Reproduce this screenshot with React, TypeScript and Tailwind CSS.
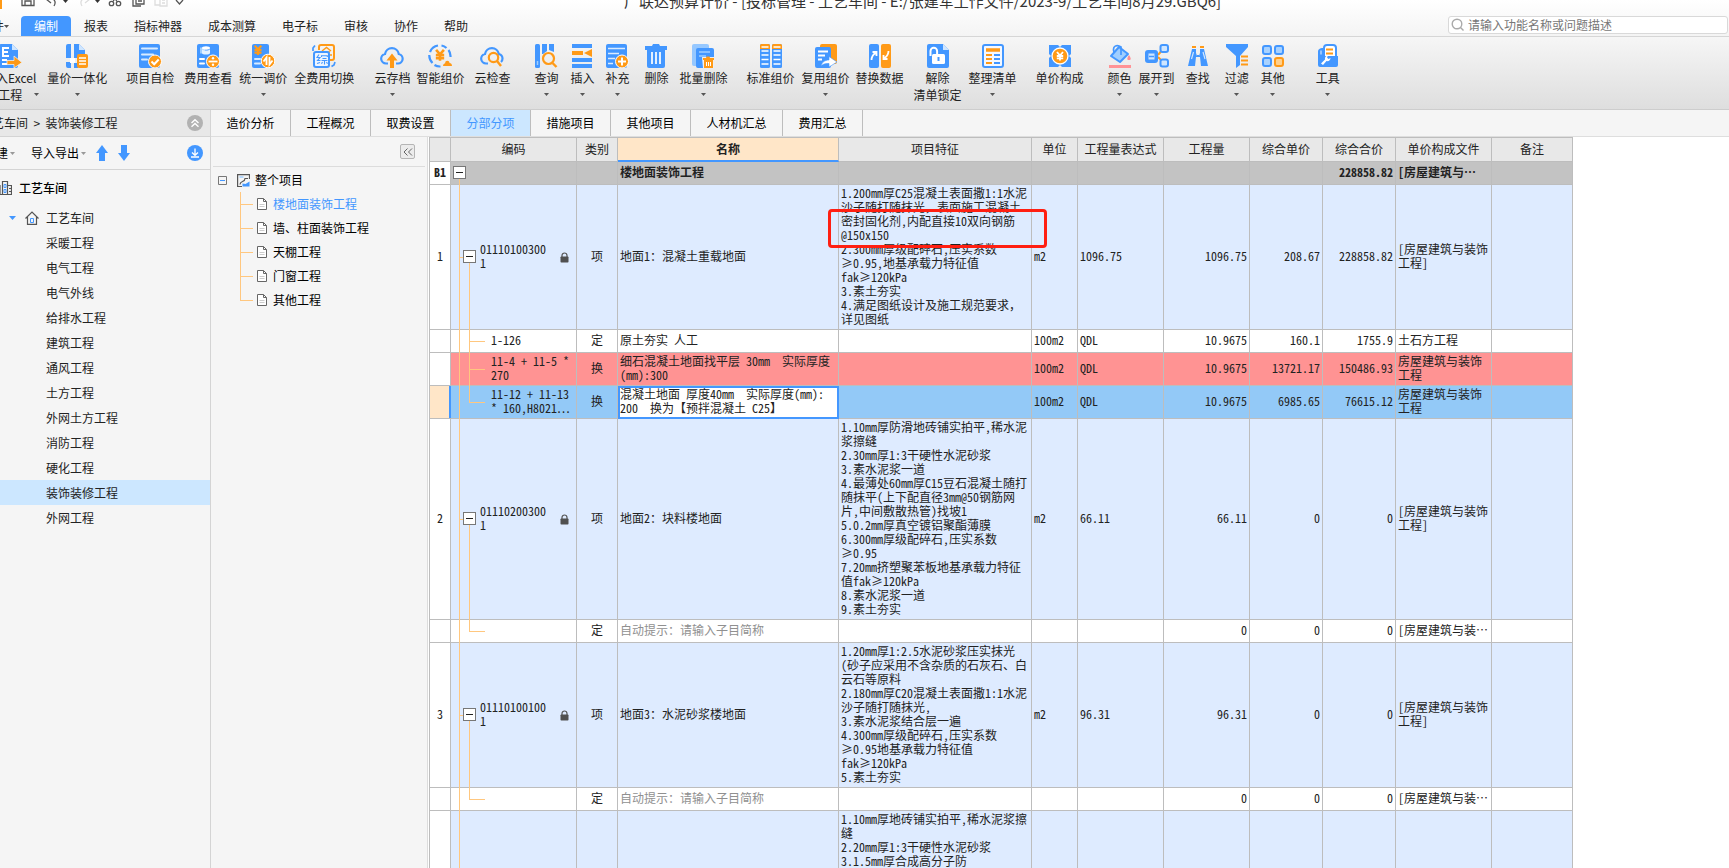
import React from "react";

const B = "#4397ff";
const O = "#ff9a17";

const Svg = ({ children, className = "size-6" }: { children: React.ReactNode; className?: string }) => (
  <svg viewBox="0 0 24 24" className={className} fill="none" aria-hidden="true">
    {children}
  </svg>
);

const Caret = ({ className = "text-[#555]" }: { className?: string }) => (
  <svg viewBox="0 0 5 3" className={`h-[3px] w-[5px] shrink-0 ${className}`} aria-hidden="true">
    <path d="M0 0h5L2.5 3z" fill="currentColor" />
  </svg>
);

const Yen = ({ x, y, s = 1, c = "#fff", w = 1.6 }: { x: number; y: number; s?: number; c?: string; w?: number }) => (
  <path
    transform={`translate(${x} ${y}) scale(${s})`}
    d="M-3-4 0-.5 3-4M0-.5V4.5M-3.2 0h6.4M-3.2 2.4h6.4"
    stroke={c}
    strokeWidth={w}
  />
);

const icons: Record<string, React.ReactNode> = {
  excel: (
    <>
      <path d="M1 2a2 2 0 0 1 2-2h11l6 6v16a2 2 0 0 1-2 2H3a2 2 0 0 1-2-2z" fill={B} />
      <path d="M14 0l6 6h-6z" fill="#cfe6ff" />
      <path d="M11 4H5v8h6M5 8h5M4 16h5M4 20h5" stroke="#fff" strokeWidth="2" />
      <path d="M9 16.5h7V12l8 6.5-8 5.500V20.500H9z" fill={O} stroke="#eee" strokeWidth=".8" />
    </>
  ),
  combine: (
    <>
      <path d="M1 2a2 2 0 0 1 2-2h3v14H1zM9 0h5l6 6v8H9zM1 18h5v6H3a2 2 0 0 1-2-2zM9 19h4v5H9z" fill={B} />
      <path d="M14 0l6 6h-6z" fill="#cfe6ff" />
      <path d="M5 14h5v5H5z" fill="#fff" />
      <rect x="12" y="10" width="11" height="14" rx="2" fill={O} />
      <path d="M14 14h7M14 17h7M14 20h7" stroke="#fff" strokeWidth="1.500" />
    </>
  ),
  check: (
    <>
      <rect x="1" y="0" width="21" height="24" rx="2" fill={B} />
      <path d="M4 4.500h15M4 10.500h11M4 15.500h5" stroke="#d9ebff" strokeWidth="2" strokeLinecap="round" />
      <circle cx="17" cy="17.500" r="6.500" fill={O} stroke="#fff" />
      <path d="M13.500 17.500l2.700 2.700 4.500-4.700" stroke="#fff" strokeWidth="2" />
    </>
  ),
  fee: (
    <>
      <rect x="1" y="0" width="22" height="24" rx="2" fill={B} />
      <path d="M4 3.500h5v6H4z" fill="#9fceff" />
      <ellipse cx="10" cy="4" rx="4" ry="1.700" fill="#fff" />
      <path d="M6 5v4c0 2 8 2 8 0V5c-1 2-7 2-8 0z" fill="#e4f1ff" />
      <path d="M4 15h4M4 19.500h4" stroke="#fff" strokeWidth="2" strokeLinecap="round" />
      <circle cx="17" cy="17.500" r="6.500" fill={O} stroke="#fff" />
      <path d="M12.500 17.500h9" stroke="#fff" strokeWidth="1.800" />
      <circle cx="17" cy="14.300" r="1.200" fill="#fff" />
      <circle cx="17" cy="20.700" r="1.200" fill="#fff" />
    </>
  ),
  adjust: (
    <>
      <rect x="1" y="0" width="17" height="24" rx="2" fill={B} />
      <Yen x={7} y={6} c={O} w={2} s={1.100} />
      <path d="M4 15h5M4 19.500h5" stroke="#d9ebff" strokeWidth="2" strokeLinecap="round" />
      <circle cx="17" cy="17" r="6.800" fill={O} stroke="#fff" />
      <path d="M12.500 17.500l3-4V21M21.500 16.500l-3 4V13" stroke="#fff" strokeWidth="1.800" />
    </>
  ),
  total: (
    <>
      <path d="M7 6V3a2 2 0 0 1 2-2h11a2 2 0 0 1 2 2v11a2 2 0 0 1-2 2h-2" stroke={O} strokeWidth="2" />
      <path d="M10 7l4.500-3.500L19 7M12 8h6M18 11h2" stroke={O} strokeWidth="1.500" />
      <path d="M1 7V4l2-2.500M23 18l-1 3-2.500 1.500" stroke={B} strokeWidth="1.700" />
      <rect x="2" y="8" width="15" height="15" rx="2" fill="#eef5ff" stroke={B} strokeWidth="2" />
      <path d="M7 10.500l-2 3h3l-2.500 3h3M5 19.500l3-1M9.500 13v-1.200h5.800V13M10.500 14.500h4M9.500 16.500h6M12.500 16.500v4M10.500 18l-1 1.700M14.500 18l1 1.700" stroke={B} strokeWidth="1.100" />
    </>
  ),
  cloudUp: (
    <>
      <path d="M8 19.500H6A4.800 4.800 0 0 1 5 10a7 7 0 0 1 13.800 0A4.800 4.800 0 0 1 18 19.500h-2" stroke={B} strokeWidth="2.200" />
      <path d="M12 9.500l5.500 7H14V24h-4v-7.500H6.500z" fill={O} />
    </>
  ),
  smart: (
    <>
      <path d="M10 1.500A10.500 10.500 0 0 0 2 8M1.300 11a10.500 10.500 0 0 0 3.200 8M6.500 21a10.500 10.500 0 0 0 6 1.500M13.500 1.500a10.500 10.500 0 0 1 5 2.500M20.500 6a10.500 10.500 0 0 1 2 7" stroke={B} strokeWidth="2.200" />
      <Yen x={12} y={11} c={O} w={2} s={1.300} />
      <path d="M15 22c0-2 1.500-2.500 2.200-2.800C17 16 21.500 16 21.500 19c1.500 0 2.500 1 2.500 3z" fill={O} />
    </>
  ),
  cloudFind: (
    <>
      <path d="M8 19.500H6A4.800 4.800 0 0 1 5 10a7 7 0 0 1 13.800 0c2 .6 3.700 2.200 3.700 4.500 0 1.500-.5 2.700-1.500 3.500" stroke={B} strokeWidth="2.200" />
      <circle cx="13.500" cy="13.500" r="4.700" stroke={O} strokeWidth="2.200" />
      <path d="M17 17l4 5" stroke={O} strokeWidth="2.400" />
    </>
  ),
  query: (
    <>
      <rect x="1" y="0" width="5" height="24" rx="1.500" fill={B} />
      <path d="M8 0h5v7l-4 3H8zM15 0h5v8l-5-2z" fill={B} />
      <path d="M3.500 17v4" stroke="#9fceff" strokeWidth="1.500" />
      <circle cx="14.500" cy="14.500" r="5.500" stroke={O} strokeWidth="2.200" />
      <path d="M18.500 19l4 4" stroke={O} strokeWidth="2.400" />
    </>
  ),
  insert: (
    <>
      <path d="M2 2h20M2 16h20M2 22h20" stroke={B} strokeWidth="4" strokeLinejoin="round" />
      <path d="M2 9h11" stroke={O} strokeWidth="4" />
      <path d="M22 5v8l-8-4z" fill={O} />
    </>
  ),
  add: (
    <>
      <rect x="1" y="0" width="21" height="24" rx="2" fill={B} />
      <path d="M3 4.500h17M3 9.500h11M3 14.500h7M3 19.500h5" stroke="#d9ebff" strokeWidth="1.700" />
      <circle cx="17" cy="17.500" r="6.500" fill={O} stroke="#fff" />
      <path d="M13 17.500h8M17 13.500v8" stroke="#fff" strokeWidth="2" />
    </>
  ),
  trash: (
    <>
      <path d="M1 2h7l1-2h6l1 2h7v4H1z" fill={B} />
      <path d="M3 5h18v17a2 2 0 0 1-2 2H5a2 2 0 0 1-2-2z" fill={B} />
      <path d="M8 8v12M12 8v12M16 8v12" stroke="#fff" strokeWidth="1.700" />
    </>
  ),
  trashes: (
    <>
      <rect x="1" y="0" width="17" height="22" rx="2" fill="#96c8ff" />
      <rect x="5" y="4" width="18" height="20" rx="2" fill={B} />
      <path d="M8 8h11M8 12h7" stroke="#9fceff" strokeWidth="1.700" />
      <path d="M11 13h12v11H12z" fill="#f0f0f0" />
      <path d="M12 14h3l.5-1.500h3L19 14h4v2H12z" fill={O} />
      <path d="M13 16h9v8h-9z" fill={O} />
      <path d="M15.500 18v4M17.500 18v4M19.500 18v4" stroke="#fff" />
    </>
  ),
  standard: (
    <>
      <rect x="1" y="0" width="10" height="24" rx="1.500" fill={B} />
      <rect x="13" y="0" width="10" height="24" rx="1.500" fill={B} />
      <path d="M1 5V1.500A1.500 1.500 0 0 1 2.500 0h7A1.500 1.500 0 0 1 11 1.500V5zM13 5V1.500A1.500 1.500 0 0 1 14.500 0h7A1.500 1.500 0 0 1 23 1.500V5z" fill={O} />
      <path d="M2.500 3h7M14.500 3h7M2.500 7h7M14.500 7h7M2.500 11h7M14.500 11h7M2.500 15.500h7M14.500 15.500h7M2.500 20h7M14.500 20h7" stroke="#fff" strokeWidth="1.700" />
    </>
  ),
  reuse: (
    <>
      <rect x="6" y="0" width="17" height="20" rx="2" fill={O} />
      <rect x="1" y="3" width="16" height="21" rx="2" fill={B} />
      <path d="M4 7.500h10M4 11.500h7M4 15.500h4" stroke="#fff" strokeWidth="1.800" />
      <path d="M7 22c1-4 4-6 8-6v-3.500l8 5.500-8 5v-3.500c-4 0-6 .5-8 2.500z" fill="#fff" stroke={B} strokeWidth=".6" />
    </>
  ),
  replace: (
    <>
      <rect x="1" y="0" width="10" height="24" rx="2" fill={B} />
      <rect x="13" y="0" width="10" height="24" rx="2" fill={O} />
      <path d="M3.500 16c0-3 1-5 4-7M4.500 8h4v4M20.500 7c0 3-1 5-4 7M19.500 15h-4v-4" stroke="#fff" strokeWidth="1.800" />
    </>
  ),
  unlock: (
    <>
      <path d="M1 2a2 2 0 0 1 2-2h14l6 6v16a2 2 0 0 1-2 2H3a2 2 0 0 1-2-2z" fill={B} />
      <path d="M17 0l6 6h-6z" fill="#cfe6ff" />
      <path d="M4.500 12V7a3.300 3.300 0 0 1 6.600 0v3" stroke="#fff" strokeWidth="2" />
      <rect x="6" y="10" width="13" height="10" rx="1.500" fill="#fff" />
      <path d="M12.500 13v4" stroke={B} strokeWidth="2" />
    </>
  ),
  list: (
    <>
      <rect x="2" y="1" width="20" height="22" rx="2" fill="#f4f8ff" stroke={B} strokeWidth="2" />
      <path d="M5 6h14" stroke={O} strokeWidth="3.500" />
      <path d="M5 11h6M5 15h6M5 19h6" stroke={O} strokeWidth="1.800" />
      <path d="M13 15h6M13 19h6M13 11h6" stroke={B} strokeWidth="1.800" />
    </>
  ),
  price: (
    <>
      <path d="M1 1h9l2 2 2-2h9v9l-2 2 2 2v9h-9l-2-2-2 2H1v-9l2-2-2-2z" fill={B} />
      <circle cx="12" cy="12" r="8" fill={O} stroke="#fff" strokeWidth="1.300" />
      <Yen x={12} y={12} w={1.800} />
    </>
  ),
  color: (
    <>
      <path d="M11 3l9 7-8 8-9-6z" fill="#9fceff" stroke={B} strokeWidth="2" strokeLinejoin="round" />
      <path d="M6 8c-2-6 3-8 7-5v8" stroke={B} strokeWidth="1.700" />
      <path d="M21 11c2 3 2.500 5 0 5s-2-2 0-5z" fill="#ff8f93" />
      <path d="M1 22.500h22" stroke="#ff9396" strokeWidth="3" />
    </>
  ),
  expand: (
    <>
      <path d="M13 11l5-6M13 13l5 5" stroke={O} strokeWidth="2" />
      <rect x="0" y="6" width="13" height="13" rx="3" fill={B} />
      <rect x="3.500" y="9.500" width="6" height="6" fill="#cfe6ff" />
      <path d="M4 12.500h5" stroke={B} strokeWidth="1.500" />
      <rect x="15.500" y="1" width="7.500" height="7" rx="2" fill="#cfe6ff" stroke={B} strokeWidth="2" />
      <rect x="15.500" y="15.500" width="7.500" height="7" rx="2" fill="#cfe6ff" stroke={B} strokeWidth="2" />
    </>
  ),
  find: (
    <>
      <path d="M6 5h4v4l1 3v-1h2v1l1-3V5h4l4 17h-7l-1-9h-4l-1 9H2z" fill={B} />
      <path d="M6 3h4M14 3h4" stroke={O} strokeWidth="2" />
      <path d="M7.500 8l-2 7M17 8l2 7" stroke="#cfe6ff" strokeWidth="1.200" />
    </>
  ),
  filter: (
    <>
      <path d="M1 0h22v3l-8 9v9l-4 3V12L1 3z" fill={B} />
      <path d="M16 12.500h7M16 16.500h7M16 20.500h7" stroke={O} strokeWidth="2" />
    </>
  ),
  other: (
    <>
      <rect x="2" y="2" width="8" height="8" rx="2" fill="#a8d2ff" stroke={B} strokeWidth="2" />
      <rect x="14" y="2" width="8" height="8" rx="2" fill="#a8d2ff" stroke={B} strokeWidth="2" />
      <rect x="2" y="14" width="8" height="8" rx="2" fill="#a8d2ff" stroke={B} strokeWidth="2" />
      <rect x="14" y="14" width="8" height="8" rx="2" fill="#ffd08d" stroke={O} strokeWidth="2" />
    </>
  ),
  tools: (
    <>
      <rect x="8" y="1" width="12" height="14" rx="3" fill="#fff" stroke={B} strokeWidth="2" />
      <path d="M10 5.500h7M10 9.500h7" stroke={O} strokeWidth="2" />
      <path d="M2 8c0-3 2-4 5-4v8h15v9a2 2 0 0 1-2 2H4a2 2 0 0 1-2-2z" fill={B} />
      <path d="M5 6.500v4" stroke="#cfe6ff" strokeWidth="1.200" />
      <path d="M5 19.500l4-4c-.5-2 1-4 3-4l-1 2 1.500 1.500 2-1c0 2.500-2 3.500-4 3L7 21z" fill="#fff" />
    </>
  ),
};

type Tool = { icon: string; label: string; gap: string; second?: string; caret?: boolean };

const tools: Tool[] = [
  { icon: "excel", label: "导入Excel", second: "工程", gap: "-ml-4", caret: true },
  { icon: "combine", label: "量价一体化", gap: "ml-[11px]", caret: true },
  { icon: "check", label: "项目自检", gap: "ml-[19px]" },
  { icon: "fee", label: "费用查看", gap: "ml-2.5" },
  { icon: "adjust", label: "统一调价", gap: "ml-[7px]", caret: true },
  { icon: "total", label: "全费用切换", gap: "ml-[7px]" },
  { icon: "cloudUp", label: "云存档", gap: "ml-5", caret: true },
  { icon: "smart", label: "智能组价", gap: "ml-1.5" },
  { icon: "cloudFind", label: "云检查", gap: "ml-2.5" },
  { icon: "query", label: "查询", gap: "ml-6", caret: true },
  { icon: "insert", label: "插入", gap: "ml-3", caret: true },
  { icon: "add", label: "补充", gap: "ml-[11px]", caret: true },
  { icon: "trash", label: "删除", gap: "ml-[15px]" },
  { icon: "trashes", label: "批量删除", gap: "ml-[11px]", caret: true },
  { icon: "standard", label: "标准组价", gap: "ml-[19px]" },
  { icon: "reuse", label: "复用组价", gap: "ml-[7px]", caret: true },
  { icon: "replace", label: "替换数据", gap: "ml-1.5" },
  { icon: "unlock", label: "解除", second: "清单锁定", gap: "ml-2.5" },
  { icon: "list", label: "整理清单", gap: "ml-[7px]", caret: true },
  { icon: "price", label: "单价构成", gap: "ml-[19px]" },
  { icon: "color", label: "颜色", gap: "ml-6", caret: true },
  { icon: "expand", label: "展开到", gap: "ml-[7px]", caret: true },
  { icon: "find", label: "查找", gap: "ml-[11px]" },
  { icon: "filter", label: "过滤", gap: "ml-[15px]", caret: true },
  { icon: "other", label: "其他", gap: "ml-3", caret: true },
  { icon: "tools", label: "工具", gap: "ml-[31px]", caret: true },
];

const menus = ["编制", "报表", "指标神器", "成本测算", "电子标", "审核", "协作", "帮助"];
const tabs = ["造价分析", "工程概况", "取费设置", "分部分项", "措施项目", "其他项目", "人材机汇总", "费用汇总"];
const projects = ["采暖工程", "电气工程", "电气外线", "给排水工程", "建筑工程", "通风工程", "土方工程", "外网土方工程", "消防工程", "硬化工程", "装饰装修工程", "外网工程"];
const sections = ["楼地面装饰工程", "墙、柱面装饰工程", "天棚工程", "门窗工程", "其他工程"];

function TitleBar() {
  return (
    <div className="relative -mt-3.5 flex h-[30px] items-center">
      <div className="flex items-center text-[#666]">
        <span className="h-4 w-0.5 bg-[#ff9a17]" />
        <svg viewBox="0 0 170 16" className="ml-4 h-4 w-[170px]" fill="none" stroke="#555" strokeWidth="1.300" aria-hidden="true">
          <path d="M4 0v12.500h12V0M7 12V8h6v4" />
          <path d="M28 6l5-4M28 6l5 4M30 6c5-2 9 2 6 7" />
          <path d="M45 7h5l-2.500 3z" fill="#333" stroke="none" />
          <path d="M72 6l-5-4M72 6l-5 4M70 6c-5-2-9 2-6 7" stroke="#ddd" />
          <path d="M77 7h5l-2.500 3z" fill="#333" stroke="none" />
          <circle cx="93.500" cy="10.500" r="2.200" />
          <circle cx="100.500" cy="10.500" r="2.200" />
          <path d="M95 8.500L100 1M99 8.500L94 1" />
          <path d="M118 2v9h8V2M115 4v9h8M120 5h4M120 8h4" />
          <path d="M137 0v12h5M142 4h7v9h-7zM144 7h3M144 10h3" stroke="#ddd" />
          <path d="M158 7l3.500 4L165 7" />
        </svg>
      </div>
      <h1 className="absolute left-[624px] whitespace-nowrap text-[15px] leading-7 text-[#333]">
        广联达预算计价 - [投标管理 - 工艺车间 - E:/张建军工作文件/2023-9/工艺车间8月29.GBQ6]
      </h1>
    </div>
  );
}

function MenuBar() {
  return (
    <div className="flex h-5 items-stretch">
      <nav className="-ml-5 flex">
        <button className="flex w-[41px] items-center whitespace-nowrap">
          文件
          <Caret />
        </button>
        {menus.map((m, i) => (
          <button
            key={m}
            className={i === 0 ? "rounded-t-sm bg-[#4397ff] px-[13px] leading-5 text-white" : "px-[13px] leading-5"}
          >
            {m}
          </button>
        ))}
      </nav>
      <label className="ml-auto mr-px flex h-[18px] w-[280px] items-center rounded-[3px] border border-[#d9d9d9] bg-white">
        <svg viewBox="0 0 14 14" className="ml-0.5 size-3.5" fill="none" stroke="#aaa" strokeWidth="1.400" aria-hidden="true">
          <circle cx="6" cy="6" r="4.800" />
          <path d="M9.500 9.500l3 3" />
        </svg>
        <input
          aria-label="搜索功能"
          placeholder="请输入功能名称或问题描述"
          className="ml-[3px] h-4 flex-1 bg-transparent text-xs text-[#444] outline-none placeholder:text-[#777]"
        />
      </label>
    </div>
  );
}

function Ribbon() {
  return (
    <div className="flex h-[74px] items-start overflow-hidden border-y border-b-[#cdcdcd] border-t-[#d6d6d6] bg-linear-to-b from-[#f6f6f6] to-[#dedede] pt-[7px]">
      {tools.map((t) => (
        <button key={t.label} className={`flex shrink-0 flex-col items-center whitespace-nowrap leading-[17px] ${t.gap}`}>
          <Svg>{icons[t.icon]}</Svg>
          <span className="mt-px">{t.label}</span>
          {t.second ? (
            <span className="relative">
              {t.second}
              {t.caret && (
                <span className="absolute left-full top-[7px] ml-3">
                  <Caret />
                </span>
              )}
            </span>
          ) : (
            t.caret && (
              <span className="flex h-4 items-center">
                <Caret />
              </span>
            )
          )}
        </button>
      ))}
    </div>
  );
}

function ProjectPanel() {
  return (
    <aside className="flex w-[211px] shrink-0 flex-col overflow-hidden border-r border-[#d4d4d4] bg-[#f5f5f5]">
      <div className="flex h-[27px] items-center border-b border-[#d4d4d4] bg-[#e8e8e8] pr-[7px]">
        <span className="-ml-5 whitespace-pre">{"工艺车间  >  装饰装修工程"}</span>
        <button aria-label="收起" className="ml-auto">
          <svg viewBox="0 0 16 16" className="size-4" fill="none" aria-hidden="true">
            <circle cx="8" cy="8" r="8" fill="#b2b2b2" />
            <path d="M4.500 8L8 4.700 11.500 8M4.500 11.700L8 8.400l3.500 3.300" stroke="#fff" strokeWidth="1.400" />
          </svg>
        </button>
      </div>
      <div className="flex h-[33px] items-center border-b border-[#d4d4d4] pr-[7px]">
        <button className="-ml-4 flex items-center gap-0.5 whitespace-nowrap text-black">
          新建
          <Caret className="text-[#999]" />
        </button>
        <button className="ml-4 flex items-center gap-0.5 whitespace-nowrap text-black">
          导入导出
          <Caret className="text-[#999]" />
        </button>
        <button aria-label="上移" className="ml-2.5">
          <svg viewBox="0 0 12 16" className="h-4 w-3" aria-hidden="true">
            <path d="M6 0l6 8H9v8H3V8H0z" fill={B} />
          </svg>
        </button>
        <button aria-label="下移" className="ml-2.5">
          <svg viewBox="0 0 12 16" className="h-4 w-3" aria-hidden="true">
            <path d="M6 16l6-8H9V0H3v8H0z" fill={B} />
          </svg>
        </button>
        <button aria-label="下载" className="ml-auto">
          <svg viewBox="0 0 16 16" className="size-4" fill="none" aria-hidden="true">
            <circle cx="8" cy="8" r="8" fill={B} />
            <path d="M8 3.500V10M5 7.500L8 10.300 11 7.500M4 12h8" stroke="#fff" strokeWidth="1.300" />
          </svg>
        </button>
      </div>
      <div className="flex h-9 items-center text-black">
        <svg viewBox="0 0 12 14" className="mr-[7px] h-3.5 w-3" fill="none" aria-hidden="true">
          <path d="M0 4v9.500M0 13.500h12M2.500 13V.5h5V13M8 4.500h3.500V13M9 7.500h2M9 10.500h2" stroke="#555" strokeWidth="1.200" />
          <path d="M4 3.500h2v3H4zM4 8.500h2v3H4z" stroke={B} />
        </svg>
        <span className="font-medium">工艺车间</span>
      </div>
      <button className="flex h-6 items-center pl-[9px]">
        <svg viewBox="0 0 7 4" className="h-1 w-[7px]" aria-hidden="true">
          <path d="M0 0h7L3.500 4z" fill={B} />
        </svg>
        <svg viewBox="0 0 14 14" className="ml-[9px] mr-[7px] size-3.5" fill="none" aria-hidden="true">
          <path d="M.5 7.500L7 1l6.500 6.500M2.500 6v7.300h9V6" stroke="#555" strokeWidth="1.200" />
          <path d="M5.500 7.500h3v4h-3z" stroke={B} />
        </svg>
        工艺车间
      </button>
      {projects.map((p) => (
        <button key={p} className={`h-[25px] shrink-0 pl-[46px] text-left ${p === "装饰装修工程" ? "bg-[#cce7ff]" : ""}`}>
          {p}
        </button>
      ))}
    </aside>
  );
}

function SectionPanel() {
  return (
    <section className="flex w-[217px] shrink-0 flex-col border-r border-[#dcdcdc] bg-[#f5f5f5] text-black">
      <div className="mx-0.5 flex h-[30px] items-center justify-end border-b border-[#dcdcdc] pr-2.5">
        <button aria-label="折叠" className="flex size-[15px] items-center justify-center rounded-[2px] border border-[#b5b5b5] bg-[#ececec]">
          <svg viewBox="0 0 10 8" className="h-2 w-2.5" fill="none" stroke="#666" aria-hidden="true">
            <path d="M4.500.5L1 4l3.500 3.500M9 .5L5.500 4 9 7.500" />
          </svg>
        </button>
      </div>
      <button className="mt-px flex h-6 items-center pl-[7px]">
        <svg viewBox="0 0 9 9" className="size-[9px]" fill="none" aria-hidden="true">
          <path d="M.5.500h8v8h-8z" stroke="#777" />
          <path d="M2 4.500h5" stroke={B} />
        </svg>
        <svg viewBox="0 0 13 13" className="ml-2.5 mr-[5px] size-[13px]" fill="none" aria-hidden="true">
          <path d="M12.500 5V.6H.6v11.900H5M3 10.500c0-4 5-2 5-6h3" stroke="#555" strokeWidth="1.200" />
          <path d="M2.500 3h4" stroke="#9fceff" strokeWidth="1.500" />
          <path d="M5.500 12.500v-3l3 .5L12.500 7.500v5z" fill={B} />
        </svg>
        整个项目
      </button>
      <ul>
        {sections.map((s, i) => (
          <li key={s} className="relative flex h-6 items-center pl-[46px]">
            <span className={`absolute left-[29px] top-0 w-px bg-[#ffc77f] ${i === sections.length - 1 ? "h-3" : "h-6"}`} />
            <span className="absolute left-[29px] top-3 h-px w-[13px] bg-[#ffc77f]" />
            <button className={`flex items-center gap-1.5 ${i === 0 ? "text-[#4397ff]" : ""}`}>
              <svg viewBox="0 0 10 12" className="h-3 w-2.5" fill="none" aria-hidden="true">
                <path d="M.5.500h6l3 3v8h-9z" stroke="#666" fill="#fff" />
                <path d="M6.500.5v3h3" stroke="#666" />
                <path d="M2.500 6.500h5M2.500 8.500h5" stroke="#ccc" />
              </svg>
              {s}
            </button>
          </li>
        ))}
      </ul>
    </section>
  );
}

type Kind = "item" | "plain" | "pink" | "selected";
type Row = {
  kind: Kind;
  no?: string;
  code?: string;
  tree: "parent" | "mid" | "end";
  type?: string;
  name?: string;
  hint?: boolean;
  feature?: string;
  unit?: string;
  expr?: string;
  qty?: string;
  price?: string;
  total?: string;
  file?: string;
};

const rows: Row[] = [
  {
    kind: "item", no: "1", tree: "parent", code: "01110100300\n1", type: "项", name: "地面1：混凝土重载地面",
    feature: "1.200mm厚C25混凝土表面撒1:1水泥\n沙子随打随抹光，表面施工混凝土\n密封固化剂,内配直接10双向钢筋\n@150x150\n2.300mm厚级配碎石,压实系数\n≥0.95,地基承载力特征值\nfak≥120kPa\n3.素土夯实\n4.满足图纸设计及施工规范要求，\n详见图纸",
    unit: "m2", expr: "1096.75", qty: "1096.75", price: "208.67", total: "228858.82", file: "[房屋建筑与装饰\n工程]",
  },
  { kind: "plain", tree: "mid", code: "1-126", type: "定", name: "原土夯实 人工", unit: "100m2", expr: "QDL", qty: "10.9675", price: "160.1", total: "1755.9", file: "土石方工程" },
  { kind: "pink", tree: "mid", code: "11-4 + 11-5 *\n270", type: "换", name: "细石混凝土地面找平层 30mm  实际厚度\n(mm):300", unit: "100m2", expr: "QDL", qty: "10.9675", price: "13721.17", total: "150486.93", file: "房屋建筑与装饰\n工程" },
  { kind: "selected", tree: "end", code: "11-12 + 11-13\n* 160,H8021…", type: "换", name: "混凝土地面 厚度40mm  实际厚度(mm):\n200  换为【预拌混凝土 C25】", unit: "100m2", expr: "QDL", qty: "10.9675", price: "6985.65", total: "76615.12", file: "房屋建筑与装饰\n工程" },
  {
    kind: "item", no: "2", tree: "parent", code: "01110200300\n1", type: "项", name: "地面2：块料楼地面",
    feature: "1.10mm厚防滑地砖铺实拍平,稀水泥\n浆擦缝\n2.30mm厚1:3干硬性水泥砂浆\n3.素水泥浆一道\n4.最薄处60mm厚C15豆石混凝土随打\n随抹平(上下配直径3mm@50钢筋网\n片,中间敷散热管)找坡1\n5.0.2mm厚真空镀铝聚酯薄膜\n6.300mm厚级配碎石,压实系数\n≥0.95\n7.20mm挤塑聚苯板地基承载力特征\n值fak≥120kPa\n8.素水泥浆一道\n9.素土夯实",
    unit: "m2", expr: "66.11", qty: "66.11", price: "0", total: "0", file: "[房屋建筑与装饰\n工程]",
  },
  { kind: "plain", tree: "end", type: "定", name: "自动提示：请输入子目简称", hint: true, qty: "0", price: "0", total: "0", file: "[房屋建筑与装…" },
  {
    kind: "item", no: "3", tree: "parent", code: "01110100100\n1", type: "项", name: "地面3：水泥砂浆楼地面",
    feature: "1.20mm厚1:2.5水泥砂浆压实抹光\n(砂子应采用不含杂质的石灰石、白\n云石等原料\n2.180mm厚C20混凝土表面撒1:1水泥\n沙子随打随抹光,\n3.素水泥浆结合层一遍\n4.300mm厚级配碎石,压实系数\n≥0.95地基承载力特征值\nfak≥120kPa\n5.素土夯实",
    unit: "m2", expr: "96.31", qty: "96.31", price: "0", total: "0", file: "[房屋建筑与装饰\n工程]",
  },
  { kind: "plain", tree: "end", type: "定", name: "自动提示：请输入子目简称", hint: true, qty: "0", price: "0", total: "0", file: "[房屋建筑与装…" },
];

const rowBg: Record<Kind, string> = {
  item: "bg-[#deebff]",
  plain: "bg-white",
  pink: "bg-[#ff9393]",
  selected: "bg-[#93c9f7]",
};

const LINE = "absolute bg-[#ffc77f]";

const Toggle = ({ className }: { className: string }) => (
  <button aria-label="展开或收起" className={`absolute flex size-[13px] items-center justify-center border border-[#777] bg-white ${className}`}>
    <span className="h-px w-[7px] bg-[#222]" />
  </button>
);

const cell = "border-b border-r border-[#bdbdbd] px-0.5 pt-px pb-[3px] whitespace-pre";

function CodeCell({ row }: { row: Row }) {
  return (
    <td className={`${cell} relative ${row.tree === "parent" ? "pl-[29px]" : "pl-10"}`}>
      <span className={`${LINE} -bottom-px left-2 top-0 w-px`} />
      {row.kind === "selected" && <span className="absolute -left-0.5 bottom-0 top-0 w-0.5 bg-[#4397ff]" />}
      {row.tree === "parent" ? (
        <>
          <span className={`${LINE} left-2 top-1/2 h-px w-1`} />
          <span className={`${LINE} -bottom-px left-[18px] top-1/2 w-px`} />
          <Toggle className="left-3 top-1/2 -mt-[7px]" />
          <svg viewBox="0 0 9 11" className="absolute right-[7px] top-1/2 -mt-[5px] h-[11px] w-[9px]" fill="none" aria-hidden="true">
            <path d="M2 6V3.500a2.500 2.500 0 0 1 5 0V6" stroke="#555" strokeWidth="1.200" />
            <rect x=".5" y="4.500" width="8" height="6" rx=".8" fill="#505050" />
          </svg>
        </>
      ) : (
        <>
          <span className={`${LINE} left-[18px] top-0 w-px ${row.tree === "end" ? "bottom-1/2" : "-bottom-px"}`} />
          <span className={`${LINE} left-[18px] top-1/2 h-px w-4`} />
        </>
      )}
      {row.code}
    </td>
  );
}

const headers = ["", "编码", "类别", "名称", "项目特征", "单位", "工程量表达式", "工程量", "综合单价", "综合合价", "单价构成文件", "备注"];

function BillTable() {
  return (
    <div className="relative ml-px">
      <table className="w-[1144px] table-fixed border-separate border-spacing-0 border-l border-t border-[#bdbdbd] font-['Noto_Sans_Mono_CJK_SC','Noto_Sans_CJK_SC',monospace] leading-[14px] text-[#222]">
        <colgroup>
          <col className="w-[21px]" />
          <col className="w-[126px]" />
          <col className="w-[41px]" />
          <col className="w-[221px]" />
          <col className="w-[193px]" />
          <col className="w-[46px]" />
          <col className="w-[86px]" />
          <col className="w-[86px]" />
          <col className="w-[73px]" />
          <col className="w-[73px]" />
          <col className="w-24" />
          <col className="w-[81px]" />
        </colgroup>
        <thead>
          <tr className="h-6 bg-[#e8e8e8]">
            {headers.map((h) =>
              h === "名称" ? (
                <th key={h} className="border-b-2 border-r border-b-[#4397ff] border-r-[#bdbdbd] bg-[#ffe6c8] p-0 pb-px font-bold">
                  {h}
                </th>
              ) : (
                <th key={h} className="border-b border-r border-[#bdbdbd] p-0 pb-0.5 font-normal">
                  {h}
                </th>
              ),
            )}
          </tr>
        </thead>
        <tbody>
          <tr className="h-[23px] bg-[#c3c3c3] font-bold">
            <td className={`${cell} bg-white text-center`}>B1</td>
            <td className={`${cell} relative`}>
              <span className={`${LINE} -bottom-px left-2 top-1/2 w-px`} />
              <Toggle className="left-0.5 top-1" />
            </td>
            <td className={cell} />
            <td className={cell}>楼地面装饰工程</td>
            <td className={cell} />
            <td className={cell} />
            <td className={cell} />
            <td className={cell} />
            <td className={cell} />
            <td className={`${cell} text-right`}>228858.82</td>
            <td className={cell}>[房屋建筑与…</td>
            <td className={cell} />
          </tr>
          {rows.map((r, i) => (
            <tr key={i} className={`h-[23px] ${rowBg[r.kind]}`}>
              <td className={`${cell} text-center ${r.kind === "selected" ? "bg-[#ffe6c8]" : "bg-white"}`}>{r.no}</td>
              <CodeCell row={r} />
              <td className={`${cell} text-center`}>{r.type}</td>
              <td
                className={`${cell} ${r.hint ? "text-[#909090]" : ""} ${
                  r.kind === "selected" ? "bg-white outline-2 -outline-offset-2 outline-[#4397ff]" : ""
                }`}
              >
                {r.name}
              </td>
              <td className={cell}>{r.feature}</td>
              <td className={cell}>{r.unit}</td>
              <td className={cell}>{r.expr}</td>
              <td className={`${cell} text-right`}>{r.qty}</td>
              <td className={`${cell} text-right`}>{r.price}</td>
              <td className={`${cell} text-right`}>{r.total}</td>
              <td className={cell}>{r.file}</td>
              <td className={cell} />
            </tr>
          ))}
          <tr className="h-[145px] bg-[#deebff] align-top">
            <td className={`${cell} bg-white`} />
            <td className={`${cell} relative`}>
              <span className={`${LINE} bottom-0 left-2 top-0 w-px`} />
            </td>
            <td className={cell} />
            <td className={cell} />
            <td className={cell}>{"1.10mm厚地砖铺实拍平,稀水泥浆擦\n缝\n2.20mm厚1:3干硬性水泥砂浆\n3.1.5mm厚合成高分子防"}</td>
            <td className={cell} />
            <td className={cell} />
            <td className={cell} />
            <td className={cell} />
            <td className={cell} />
            <td className={cell} />
            <td className={cell} />
          </tr>
        </tbody>
      </table>
      <span className="absolute left-[399px] top-[72px] h-[39px] w-[219px] rounded border-[3px] border-[#ff1f12]" />
    </div>
  );
}

export default function App() {
  return (
    <div className="flex h-screen flex-col overflow-hidden bg-white font-['Noto_Sans_CJK_SC',sans-serif] text-xs text-[#222]">
      <header className="shrink-0 bg-[#f5f5f5]">
        <div className="overflow-hidden bg-linear-to-b from-white to-[#f4f4f4]">
          <TitleBar />
          <MenuBar />
        </div>
        <Ribbon />
      </header>
      <div className="flex min-h-0 flex-1">
        <ProjectPanel />
        <main className="flex min-w-0 flex-1 flex-col">
          <div className="flex h-[27px] shrink-0 border-b border-[#dedede] bg-[#f5f5f5] text-black">
            {tabs.map((t, i) => (
              <button
                key={t}
                className={`border-r border-[#bdbdbd] ${t.length === 5 ? "w-[92px]" : "w-20"} ${
                  i === 3 ? "bg-[#cce7ff] text-[#4397ff]" : ""
                }`}
              >
                {t}
              </button>
            ))}
          </div>
          <div className="flex min-h-0 flex-1 overflow-hidden">
            <SectionPanel />
            <BillTable />
          </div>
        </main>
      </div>
    </div>
  );
}
